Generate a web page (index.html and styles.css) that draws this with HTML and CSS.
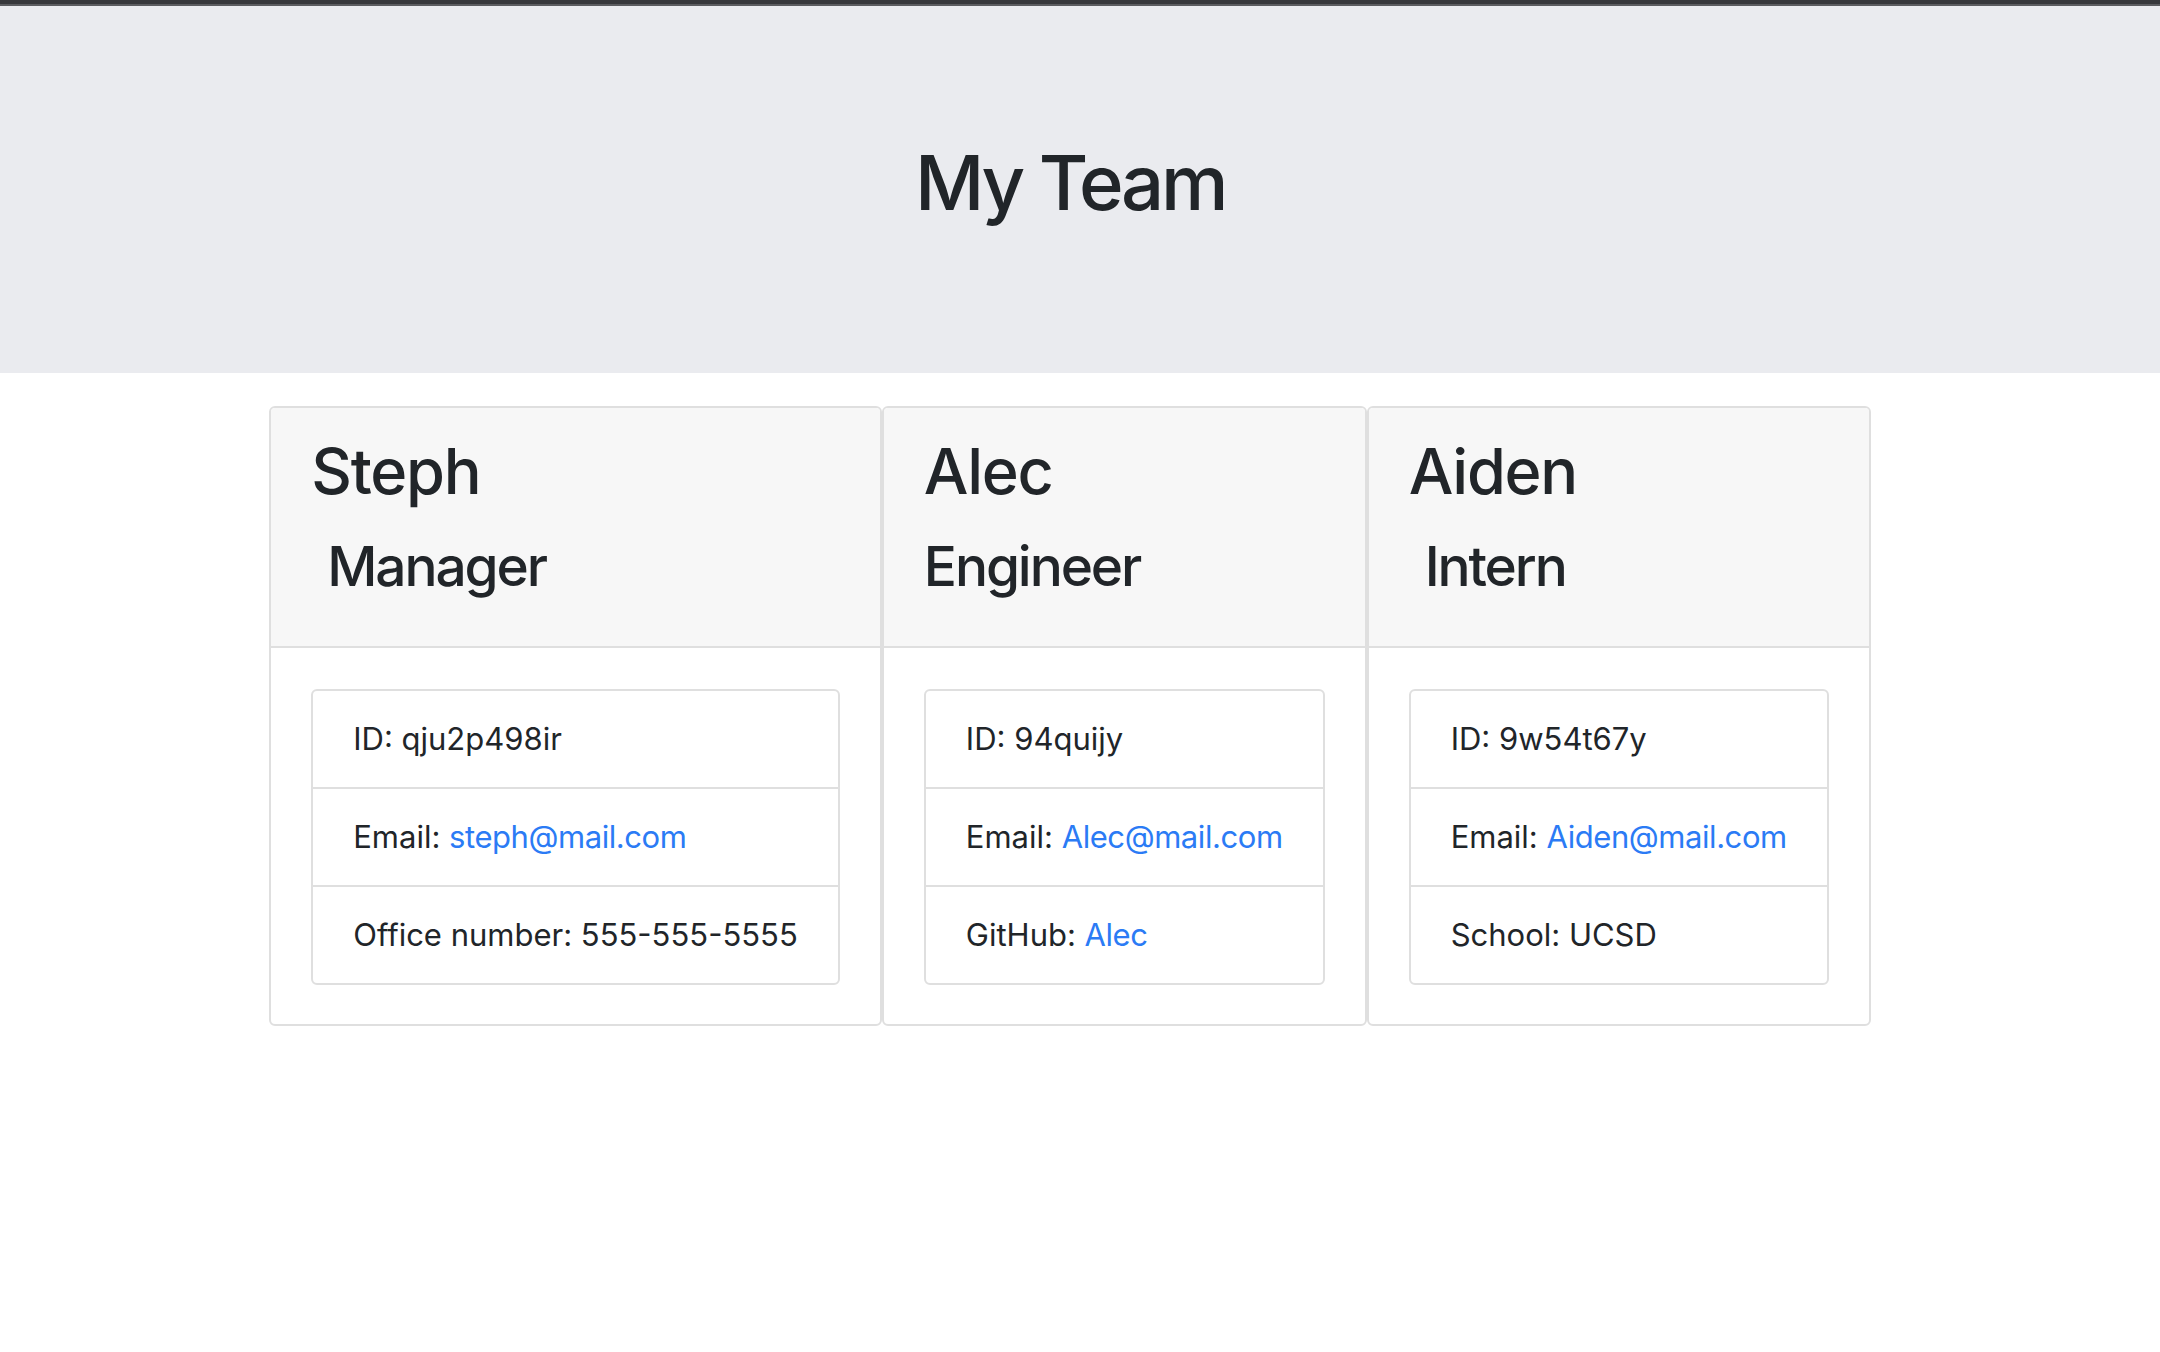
FILE: index.html
```html
<!DOCTYPE html>
<html lang="en">
<head>
<meta charset="utf-8">
<title>My Team</title>
<link rel="stylesheet" href="styles.css">
</head>
<body>
<header class="hero">
  <div class="topbar"></div>
  <h1 class="title">My Team</h1>
</header>
<main class="team">
  <section class="card">
    <div class="card-head">
      <h2 class="name">Steph</h2>
      <h3 class="role indent">Manager</h3>
    </div>
    <div class="card-body">
      <ul class="info">
        <li>ID: qju2p498ir</li>
        <li>Email: <a href="mailto:steph@mail.com">steph@mail.com</a></li>
        <li>Office number: 555-555-5555</li>
      </ul>
    </div>
  </section>
  <section class="card">
    <div class="card-head">
      <h2 class="name">Alec</h2>
      <h3 class="role">Engineer</h3>
    </div>
    <div class="card-body">
      <ul class="info">
        <li>ID: 94quijy</li>
        <li>Email: <a href="mailto:Alec@mail.com">Alec@mail.com</a></li>
        <li>GitHub: <a href="#">Alec</a></li>
      </ul>
    </div>
  </section>
  <section class="card">
    <div class="card-head">
      <h2 class="name">Aiden</h2>
      <h3 class="role indent">Intern</h3>
    </div>
    <div class="card-body">
      <ul class="info">
        <li>ID: 9w54t67y</li>
        <li>Email: <a href="mailto:Aiden@mail.com">Aiden@mail.com</a></li>
        <li>School: UCSD</li>
      </ul>
    </div>
  </section>
</main>
</body>
</html>
```
FILE: styles.css
```css
html, body {
  margin: 0;
  padding: 0;
  background: #ffffff;
}
body {
  font-family: Inter, "Liberation Sans", sans-serif;
  color: #212529;
}
.hero {
  background: #eaebef;
  height: 373px;
  box-sizing: border-box;
  padding-right: 20px;
}
.topbar {
  height: 4px;
  background: #37383c;
  border-bottom: 2px solid #5b5c60;
  margin-right: -20px;
}
.title {
  margin: 131px 0 0;
  font-size: 76px;
  line-height: 1.2;
  font-weight: 500;
  text-align: center;
  letter-spacing: -0.044em;
}
.team {
  display: flex;
  justify-content: center;
  align-items: flex-start;
  margin-top: 33px;
  padding-right: 20px;
}
.card {
  border: 2px solid #dfdfdf;
  border-radius: 6px;
  background: #fff;
  overflow: hidden;
}
.card-head {
  background: #f7f7f7;
  border-bottom: 2px solid #dfdfdf;
  padding: 26px 40px 46px;
}
.name {
  margin: 0 0 23px;
  font-size: 63px;
  line-height: 1.2;
  font-weight: 500;
  letter-spacing: -0.02em;
}
.role {
  margin: 0;
  font-size: 55px;
  line-height: 1.22;
  font-weight: 500;
  letter-spacing: -0.038em;
}
.role.indent {
  padding-left: 16px;
}
.card-body {
  padding: 41px 40px 39px;
}
.info {
  list-style: none;
  margin: 0;
  padding: 0;
  border: 2px solid #dfdfdf;
  border-radius: 6px;
}
.info li {
  padding: 25px 40px;
  font-size: 31px;
  line-height: 46px;
  white-space: nowrap;
}
.info li + li {
  border-top: 2px solid #dfdfdf;
}
.info a {
  color: #2b7bf5;
  text-decoration: none;
  letter-spacing: -0.014em;
}
```
